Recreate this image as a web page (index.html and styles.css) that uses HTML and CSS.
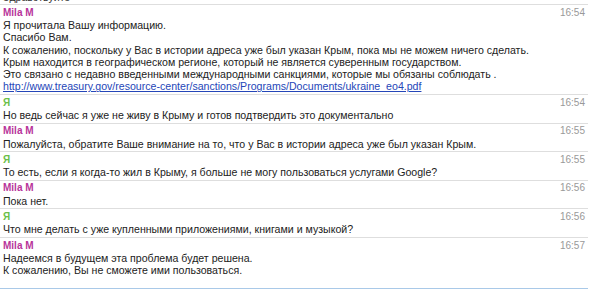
FILE: index.html
```html
<!DOCTYPE html>
<html lang="ru">
<head>
  <meta charset="UTF-8">
  <title>Чат поддержки</title>
  <link rel="stylesheet" href="styles.css">
</head>
<body>
  <div class="chat">
    <div class="prev">Здравствуйте</div>

    <div class="msg">
      <div class="head"><span class="name them">Mila M</span><span class="time">16:54</span></div>
      <div class="text">
        Я прочитала Вашу информацию.<br>
        Спасибо Вам.<br>
        К сожалению, поскольку у Вас в истории адреса уже был указан Крым, пока мы не можем ничего сделать.<br>
        Крым находится в географическом регионе, который не является суверенным государством.<br>
        Это связано с недавно введенными международными санкциями, которые мы обязаны соблюдать .<br>
        <a href="#">http://www.treasury.gov/resource-center/sanctions/Programs/Documents/ukraine_eo4.pdf</a>
      </div>
    </div>

    <div class="msg">
      <div class="head"><span class="name me">Я</span><span class="time">16:54</span></div>
      <div class="text">Но ведь сейчас я уже не живу в Крыму и готов подтвердить это документально</div>
    </div>

    <div class="msg">
      <div class="head"><span class="name them">Mila M</span><span class="time">16:55</span></div>
      <div class="text">Пожалуйста, обратите Ваше внимание на то, что у Вас в истории адреса уже был указан Крым.</div>
    </div>

    <div class="msg">
      <div class="head"><span class="name me">Я</span><span class="time">16:55</span></div>
      <div class="text">То есть, если я когда-то жил в Крыму, я больше не могу пользоваться услугами Google?</div>
    </div>

    <div class="msg">
      <div class="head"><span class="name them">Mila M</span><span class="time">16:56</span></div>
      <div class="text">Пока нет.</div>
    </div>

    <div class="msg">
      <div class="head"><span class="name me">Я</span><span class="time">16:56</span></div>
      <div class="text">Что мне делать с уже купленными приложениями, книгами и музыкой?</div>
    </div>

    <div class="msg">
      <div class="head"><span class="name them">Mila M</span><span class="time">16:57</span></div>
      <div class="text">
        Надеемся в будущем эта проблема будет решена.<br>
        К сожалению, Вы не сможете ими пользоваться.
      </div>
    </div>
  </div>

  <div class="input-bar"></div>
</body>
</html>
```

FILE: styles.css
```css
body {
  margin: 0;
  background: #fff;
  font-family: "Liberation Sans", Arial, sans-serif;
  font-size: 10.6px;
  color: #222;
  overflow: hidden;
}
.chat {
  width: 588px;
  height: 288px;
  overflow: hidden;
}
.prev {
  margin-top: -9px;
  padding: 0 3px 1px;
  line-height: 12px;
  color: #333;
}
/* one message */
.msg {
  border-top: 1px solid #dedede;
  padding: 0 3px 1.3px;
}
.head {
  display: flex;
  justify-content: space-between;
  align-items: center;
  height: 14px;
}
.name {
  font-weight: bold;
  font-size: 10px;
}
.them {
  color: #b8349a;
}
.me {
  color: #6cbf4a;
}
.time {
  font-size: 10px;
  color: #999;
}
.text {
  line-height: 12.3px;
}
.text a {
  color: #2546b8;
  text-decoration: underline;
}
.input-bar {
  width: 588px;
  height: 1px;
  border-top: 1px solid #a9c9e8;
}
```
